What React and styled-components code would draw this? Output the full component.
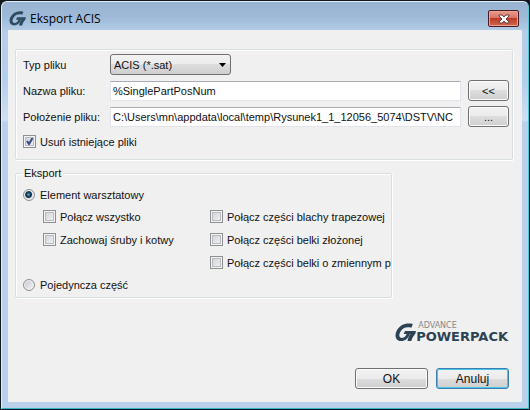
import React, {useState} from 'react'
import styled, {createGlobalStyle} from 'styled-components';

const options = {
    left: [
        {id: 'all', text: 'Połącz wszystko'},
        {id: 'bolts', text: 'Zachowaj śruby i kotwy'},
    ],
    right: [
        {id: 'sheet', text: 'Połącz części blachy trapezowej'},
        {id: 'compound', text: 'Połącz części belki złożonej'},
        {id: 'tapered', text: 'Połącz części belki o zmiennym przekroju'},
    ],
};

const Mark = () => (
    <svg viewBox="0 0 27 24" aria-hidden="true">
        <path d="M23 1L21 6C14 4 9 7 7 11C4 16 6 19 9 19C12 19 14 17 15 14H11L13 10H27L26 14C24 16 22 19 21 23H16C17 19 18 16 20 14H19C17 20 13 23 8 23C1 23 -1 16 2 10C6 2 14 -1 23 1Z"/>
    </svg>
);

export default class App extends React.Component {

    render() {
        return (
            <Desktop>
                <GlobalStyle/>
                <Frame>
                    <TitleBar>
                        <Mark/>
                        <Title>Eksport ACIS</Title>
                        <CloseButton aria-label="Zamknij">
                            <svg width="12" height="10" viewBox="0 0 12 10">
                                <path d="M1 1H4L6 3L8 1H11V2L8 5L11 8V9H8L6 7L4 9H1V8L4 5L1 2Z"/>
                            </svg>
                        </CloseButton>
                    </TitleBar>
                    <Client>
                        <FileGroup/>
                        <ExportGroup/>
                        <Brand>
                            <Mark/>
                            <BrandName>
                                <small>ADVANCE</small>
                                <strong>POWERPACK</strong>
                            </BrandName>
                        </Brand>
                        <Footer>
                            <Button $wide>OK</Button>
                            <Button $wide $active>Anuluj</Button>
                        </Footer>
                    </Client>
                </Frame>
            </Desktop>
        )
    }
}

const FileGroup = () => {
    const [name, setName] = useState('%SinglePartPosNum');
    const [path, setPath] = useState('C:\\Users\\mn\\appdata\\local\\temp\\Rysunek1_1_12056_5074\\DSTV\\NC');

    return (
        <FileBox>
            <FileGrid>
                <label htmlFor="type">Typ pliku</label>
                <Select id="type">
                    <option>ACIS (*.sat)</option>
                </Select>
                <label htmlFor="name">Nazwa pliku:</label>
                <TextBox id="name" value={name} onChange={e => setName(e.target.value)}/>
                <Button>&lt;&lt;</Button>
                <label htmlFor="path">Położenie pliku:</label>
                <TextBox id="path" value={path} onChange={e => setPath(e.target.value)}/>
                <Button>...</Button>
            </FileGrid>
            <Choice>
                <Check defaultChecked/>
                Usuń istniejące pliki
            </Choice>
        </FileBox>
    )
};

const ExportGroup = () => (
    <ExportBox>
        <legend>Eksport</legend>
        <Choice>
            <Radio name="mode" defaultChecked/>
            Element warsztatowy
        </Choice>
        <Options>
            <Column>
                {options.left.map(o => <Choice key={o.id}><Check/>{o.text}</Choice>)}
            </Column>
            <Column>
                {options.right.map(o => <Choice key={o.id}><Check/>{o.text}</Choice>)}
            </Column>
        </Options>
        <Choice>
            <Radio name="mode"/>
            Pojedyncza część
        </Choice>
    </ExportBox>
);

const GlobalStyle = createGlobalStyle`
  * {
    box-sizing: border-box;
  }
  body {
    margin: 0;
    background: #14181c;
  }
  body, input, select, button {
    font-family: "Liberation Sans", Arial, sans-serif;
    font-size: 11px;
    color: #111;
  }
`;

const Desktop = styled.div`
  display: flex;
  min-height: 100vh;
  padding: 1px;
`;

const Frame = styled.div`
  flex: 1;
  min-width: 0;
  display: flex;
  flex-direction: column;
  padding: 0 6px 6px;
  border: 1px solid #e3edf7;
  border-right-color: #4cc8dd;
  border-bottom-color: #35b4cc;
  border-radius: 6px 6px 0 0;
  background: linear-gradient(#99b4d1 0, #9db9d7 14px, #b5cee8 30px, #b4cfec 80px, #cfe0f3 118px, #b9d1ea 120px);
`;

const TitleBar = styled.header`
  display: flex;
  align-items: center;
  height: 28px;
  padding: 5px 3px 0 1px;
  > svg {
    width: 17px;
    height: 15px;
    fill: #2c4a60;
  }
`;

const Title = styled.h1`
  flex: 1;
  margin: 0 0 0 4px;
  font: 12px "Open Sans", "Noto Sans", sans-serif;
  color: #000;
`;

const CloseButton = styled.button`
  display: flex;
  align-items: center;
  justify-content: center;
  width: 31px;
  height: 17px;
  padding: 0;
  border: 1px solid #4b1b22;
  border-radius: 2px;
  box-shadow: inset 0 0 0 1px #e9a395;
  background: linear-gradient(#e79c8c 0, #d9705f 50%, #bd3b24 50%, #d2694c);
  svg {
    fill: #fff;
    stroke: #5d4549;
    stroke-width: 1;
  }
`;

const Client = styled.main`
  flex: 1;
  display: flex;
  flex-direction: column;
  padding: 19px 9px 13px 7px;
  background: #f0f0f0;
`;

const Group = styled.fieldset`
  min-width: 0;
  margin: 0;
  border: 1px solid #d8dfe2;
  border-radius: 2px;
  box-shadow: inset 1px 1px 0 #fff, 1px 1px 0 #fff;
`;

const FileBox = styled(Group)`
  padding: 4px 3px 10px 7px;
`;

const FileGrid = styled.div`
  display: grid;
  grid-template-columns: 80px 1fr 41px;
  column-gap: 7px;
  row-gap: 5px;
  align-items: center;
  margin-bottom: 7px;
  select {
    grid-column: 2 / 4;
  }
`;

const Select = styled.select`
  appearance: none;
  width: 121px;
  height: 21px;
  padding: 0 3px;
  border: 1px solid #707070;
  border-radius: 3px;
  color: #111;
  background:
    url("data:image/svg+xml,%3Csvg xmlns='http://www.w3.org/2000/svg' width='7' height='4'%3E%3Cpath d='M0 0H7L3.5 4Z'/%3E%3C/svg%3E") no-repeat right 4px center,
    linear-gradient(#f2f2f2, #ebebeb 50%, #dddddd 50%, #cfcfcf);
`;

const TextBox = styled.input`
  min-width: 0;
  width: 100%;
  height: 20px;
  padding: 0 2px;
  border: 1px solid #e2e3ea;
  border-top-color: #abadb3;
  background: #fff;
`;

const Button = styled.button`
  width: ${props => props.$wide ? '73px' : '41px'};
  height: 21px;
  padding: 0;
  border: 1px solid ${props => props.$active ? '#3c7fb1' : '#707070'};
  border-radius: 3px;
  box-shadow: inset 0 0 0 1px ${props => props.$active ? '#48c4e8' : '#fbfbfb'};
  font-size: ${props => props.$wide ? '12px' : '11px'};
  background: linear-gradient(#f2f2f2, #ebebeb 50%, #dddddd 50%, #cfcfcf);
`;

const Choice = styled.label`
  display: flex;
  align-items: center;
  gap: 4px;
  height: 15px;
  white-space: nowrap;
`;

const Check = styled.input.attrs({type: 'checkbox'})`
  appearance: none;
  flex: none;
  width: 13px;
  height: 13px;
  margin: 0;
  border: 1px solid #8e8f8f;
  box-shadow: inset 0 0 0 1px #f4f4f4, inset 0 0 0 2px #b8bcc0;
  background: linear-gradient(135deg, #cbcfd5, #f6f6f6);
  &:checked {
    background:
      url("data:image/svg+xml,%3Csvg xmlns='http://www.w3.org/2000/svg' width='11' height='11'%3E%3Cpath d='M3 5L5 8L8.500 2' fill='none' stroke='%23354a8c' stroke-width='2'/%3E%3C/svg%3E") no-repeat center,
      linear-gradient(135deg, #cbcfd5, #f6f6f6);
  }
`;

const Radio = styled.input.attrs({type: 'radio'})`
  appearance: none;
  flex: none;
  width: 12px;
  height: 12px;
  margin: 0 1px 0 0;
  border: 1px solid #8e8f8f;
  border-radius: 50%;
  box-shadow: inset 0 0 0 1px #f4f4f4;
  background: linear-gradient(135deg, #c3c7cc, #f6f6f6);
  &:checked {
    background: radial-gradient(circle at 45% 45%, #5fb5d8 0, #14415f 2px, #14344c 3px, #d5dbe0 4px);
  }
`;

const ExportBox = styled(Group)`
  margin: 6px 121px 0 0;
  padding: 7px 0 5px 7px;
  overflow: hidden;
  legend {
    padding: 0 3px 0 1px;
    line-height: 14px;
    background: #f0f0f0;
  }
`;

const Options = styled.div`
  display: grid;
  grid-template-columns: 160px 1fr;
  column-gap: 7px;
  margin: 7px 0 7px 20px;
`;

const Column = styled.div`
  display: flex;
  flex-direction: column;
  gap: 8px;
  min-width: 0;
`;

const Brand = styled.div`
  display: flex;
  align-items: center;
  align-self: flex-end;
  margin: 23px 5px 0 0;
  svg {
    width: 21px;
    height: 19px;
    fill: #2c4354;
  }
`;

const BrandName = styled.div`
  display: flex;
  flex-direction: column;
  font-family: "DejaVu Sans", sans-serif;
  small {
    padding-left: 2px;
    font-size: 8px;
    line-height: 9px;
    color: #85888b;
  }
  strong {
    font-size: 13px;
    line-height: 13px;
    color: #2c4354;
  }
`;

const Footer = styled.footer`
  display: flex;
  justify-content: flex-end;
  gap: 8px;
  margin-top: auto;
  padding-right: 4px;
`;
